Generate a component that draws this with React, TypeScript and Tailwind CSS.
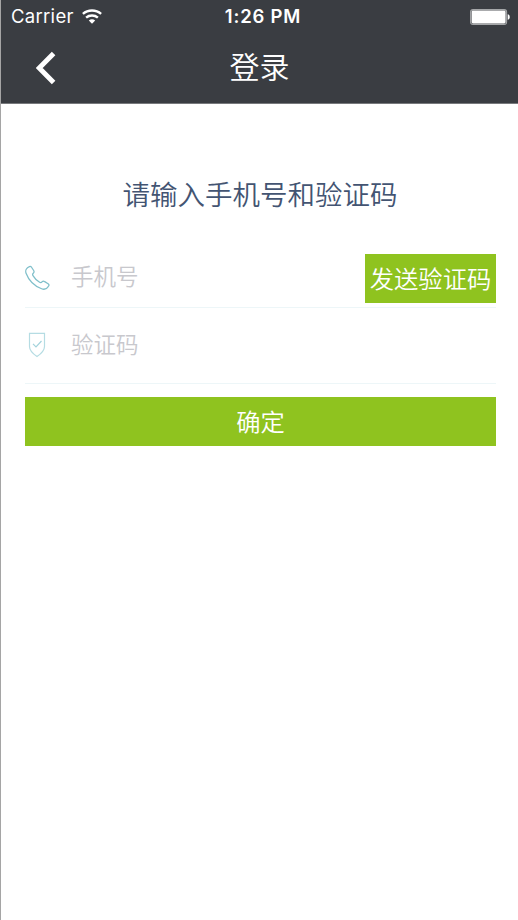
import { useState } from 'react';

const WifiIcon = () => (
  <svg width="20" height="15" viewBox="0 0 20 15" fill="none" aria-hidden="true">
    <path d="M0.9 4.9C6 0.3 14 0.3 19.1 4.9" stroke="#fff" strokeWidth="2.4" />
    <path d="M4.1 8.6C7.4 5.7 12.6 5.7 15.9 8.6" stroke="#fff" strokeWidth="2.4" />
    <path d="M10 14.8L6.8 11.5C8.6 9.8 11.4 9.8 13.2 11.5Z" fill="#fff" />
  </svg>
);

const BatteryIcon = () => (
  <svg width="40" height="16" viewBox="0 0 40 16" fill="none" aria-hidden="true">
    <rect x="0.6" y="0.6" width="36" height="14.8" rx="2.4" stroke="#a5a7a9" strokeWidth="1.1" />
    <rect x="1.6" y="1.6" width="34" height="12.8" rx="1.4" fill="#fff" />
    <path d="M37.7 5.2C40.4 5.6 40.4 10.4 37.7 10.8Z" fill="#fff" />
  </svg>
);

const BackIcon = () => (
  <svg width="20" height="34" viewBox="0 0 20 34" fill="none" aria-hidden="true">
    <path d="M17.6 2.6L3.2 17L17.6 31.4" stroke="#fff" strokeWidth="5" />
  </svg>
);

const PhoneIcon = () => (
  <svg width="25" height="26" viewBox="0 0 26 26" fill="none" aria-hidden="true">
    <path
      d="M4.6 1.1C5.6 0.7 6.3 1 6.8 1.8L9 5.2C9.7 6.3 9.5 7.2 8.6 8C7.8 8.7 7.7 9.5 8.3 10.5C10 13.4 12.4 15.8 15.2 17.5C16.2 18.1 16.9 18 17.7 17.1C18.5 16.2 19.5 16.1 20.5 16.8L24 19C24.9 19.6 25.2 20.4 24.6 21.3C22.8 24.3 20.3 25.4 17.3 24.2C9.9 21.3 3.7 15 1.1 8C0.1 5.2 1.5 2.3 4.6 1.1Z"
      stroke="#7fbfca"
      strokeWidth="1.3"
      strokeLinejoin="round"
    />
  </svg>
);

const ShieldIcon = () => (
  <svg width="18" height="26" viewBox="0 0 18 26" fill="none" aria-hidden="true">
    <path d="M1.5 1.3H16.5V14.5C16.5 18.8 13 21.8 9 24.6C5 21.8 1.5 18.8 1.5 14.5Z" stroke="#b5dce3" strokeWidth="1.2" />
    <path d="M5 11.8L8 14.8L13.5 9" stroke="#a3d3dc" strokeWidth="1.2" />
  </svg>
);

const inputClass =
  'h-9 min-w-0 flex-1 bg-transparent text-[22.5px] font-[350] text-gray-600 outline-none placeholder:text-[#c8c8cd]';

const App = () => {
  const [phone, setPhone] = useState('');
  const [code, setCode] = useState('');

  return (
    <div className="h-[920px] w-[518px] overflow-hidden border-l border-[#a5a5a5] bg-white font-['Inter','Noto_Sans_CJK_SC',sans-serif]">
      <header className="h-[104px] border-b border-[#77797c] bg-[#3a3d42] text-white">
        {/* Status bar */}
        <div className="grid h-[33px] grid-cols-3 items-center pl-[10px] pr-2">
          <div className="flex items-center gap-2">
            <span className="text-[18.5px] tracking-[0.3px]">Carrier</span>
            <WifiIcon />
          </div>
          <span className="pl-[5px] text-center text-[18.5px] font-semibold tracking-[0.8px]">1:26 PM</span>
          <div className="flex justify-end">
            <BatteryIcon />
          </div>
        </div>

        {/* Navigation bar */}
        <div className="grid h-[70px] grid-cols-[60px_1fr_60px] items-center">
          <button aria-label="返回" className="flex justify-end pr-[5px]">
            <BackIcon />
          </button>
          <h1 className="pb-[2px] text-center text-[30px] font-[350] leading-none">登录</h1>
        </div>
      </header>

      <main className="pl-6 pr-[22px]">
        <h2 className="pt-[71px] pr-px text-center text-[27.5px] font-[350] leading-10 text-[#435472]">请输入手机号和验证码</h2>

        <form onSubmit={(e) => e.preventDefault()}>
          <div className="mt-[39px] flex h-[54px] items-start border-b border-[#edf6f8]">
            <div className="flex h-12 w-[46px] items-center">
              <PhoneIcon />
            </div>
            <input
              type="tel"
              value={phone}
              onChange={(e) => setPhone(e.target.value)}
              placeholder="手机号"
              className={`${inputClass} mt-1`}
            />
            <button type="button" className="h-[49px] w-[131px] bg-[#8fc31f] pt-[2px] text-[24.3px] font-[350] leading-none text-white">
              发送验证码
            </button>
          </div>

          <div className="flex h-[76px] items-center border-b border-[#edf6f8] pb-[2px]">
            <div className="w-[46px] pl-[3px]">
              <ShieldIcon />
            </div>
            <input
              value={code}
              onChange={(e) => setCode(e.target.value)}
              placeholder="验证码"
              className={inputClass}
            />
          </div>

          <button type="submit" className="mt-[13px] h-[48.5px] w-full bg-[#8fc31f] pt-[2px] text-[24.3px] font-[350] leading-none text-white">
            确定
          </button>
        </form>
      </main>
    </div>
  );
};

export default App;
